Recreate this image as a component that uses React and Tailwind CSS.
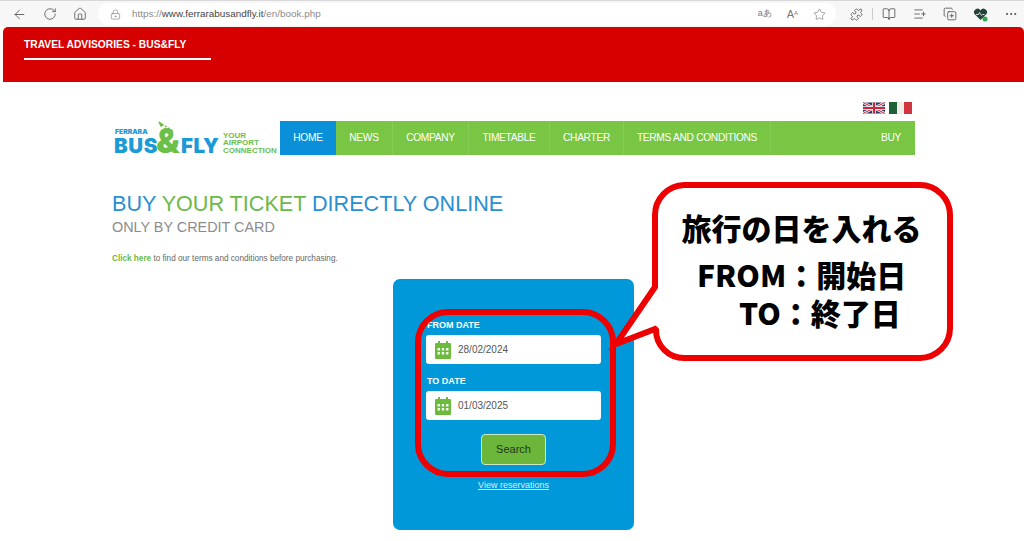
import { ArrowLeft, RotateCw, Home, LockKeyhole, Star, BookOpen, ListPlus, CopyPlus, MoreHorizontal, Puzzle } from 'lucide-react';

const sans = 'font-["Liberation_Sans",Arial,sans-serif]';

const navItems = [
  { label: 'NEWS', width: 'w-[57px]' },
  { label: 'COMPANY', width: 'w-[76px]' },
  { label: 'TIMETABLE', width: 'w-[81px]' },
  { label: 'CHARTER', width: 'w-[74px]' },
  { label: 'TERMS AND CONDITIONS', width: 'w-[147px]' },
];

function CalendarIcon() {
  return (
    <svg width="16" height="18" viewBox="0 0 16 18" className="shrink-0">
      <rect x="3" y="0" width="2" height="4" fill="#6cbb3c" />
      <rect x="11" y="0" width="2" height="4" fill="#6cbb3c" />
      <path d="M1 2h14a1 1 0 0 1 1 1v14a1 1 0 0 1-1 1H1a1 1 0 0 1-1-1V3a1 1 0 0 1 1-1z" fill="#6cbb3c" />
      <g fill="#ffffff" opacity="0.9">
        <rect x="2.5" y="7" width="2.5" height="2.5" />
        <rect x="6.75" y="7" width="2.5" height="2.5" />
        <rect x="11" y="7" width="2.5" height="2.5" />
        <rect x="2.5" y="11" width="2.5" height="2.5" />
        <rect x="6.75" y="11" width="2.5" height="2.5" />
        <rect x="11" y="11" width="2.5" height="2.5" />
      </g>
    </svg>
  );
}

function DateField({ label, value }) {
  return (
    <div>
      <div className="ml-[1px] text-[9px] leading-[12px] font-bold text-white">{label}</div>
      <div className="mt-[4px] flex h-[29px] w-[175px] items-center gap-[7px] rounded-[3px] bg-white pl-[9px] text-[10px] text-[#555]">
        <CalendarIcon />
        {value}
      </div>
    </div>
  );
}

function Flags() {
  return (
    <div className="flex justify-end gap-[4px] pr-[3px]">
      <svg width="22" height="12" viewBox="0 0 60 30">
        <rect width="60" height="30" fill="#2b3a6b" />
        <path d="M0 0L60 30M60 0L0 30" stroke="#fff" strokeWidth="7" />
        <path d="M0 0L60 30M60 0L0 30" stroke="#c8283c" strokeWidth="3" />
        <path d="M30 0V30M0 15H60" stroke="#fff" strokeWidth="10" />
        <path d="M30 0V30M0 15H60" stroke="#c8283c" strokeWidth="6" />
      </svg>
      <div className="flex h-[12px] w-[23px]">
        <div className="flex-1 bg-[#1f5f38]" />
        <div className="flex-1 bg-[#f0ede6]" />
        <div className="flex-1 bg-[#d0343c]" />
      </div>
    </div>
  );
}

function Logo() {
  return (
    <div className="relative flex h-[34px] w-[167px] items-end pb-[1px]">
      <div className='relative h-[33px] w-[110px] font-["Inter",sans-serif] font-black'>
        <div className="absolute left-[2px] top-[7px] text-[6.8px] leading-[7px] text-[#1b9ad6]">FERRARA</div>
        <div className="absolute bottom-[0px] left-[1px] text-[20.5px] leading-[17px] tracking-[0.6px] text-[#1b9ad6]">BUS</div>
        <div className="absolute bottom-[0px] left-[43px] text-[34px] leading-[26px] text-[#6cc04a]">&amp;</div>
        <div className="absolute bottom-[0px] left-[68px] text-[20.5px] leading-[17px] tracking-[0.6px] text-[#1b9ad6]">FLY</div>
        <svg width="18" height="15" viewBox="0 0 18 15" className="absolute left-[45px] top-[0px]">
          <path d="M1 1l4 3-2 1z" stroke="#6cc04a" strokeWidth="1.4" fill="#6cc04a" />
          <path d="M7 5l1.5 1M10 7l1.5 1M13 9l1.5 1" stroke="#6cc04a" strokeWidth="1.6" fill="none" />
        </svg>
      </div>
      <div className="text-[8px] leading-[7.5px] font-bold whitespace-nowrap text-[#6cc04a]">
        YOUR<br />AIRPORT<br />CONNECTION
      </div>
    </div>
  );
}

export default function App() {
  return (
    <div className={`relative h-[541px] w-[1024px] overflow-hidden bg-white ${sans}`}>
      {/* browser chrome */}
      <div className="flex h-[27px] items-center border-t border-[#d8d8d8] bg-[#f7f7f7] text-[#555]">
        <div className="ml-[12px] flex items-center gap-[16px]">
          <ArrowLeft size={15} strokeWidth={1.4} />
          <RotateCw size={14} strokeWidth={1.4} />
          <Home size={14} strokeWidth={1.4} />
        </div>
        <div className="ml-[11px] flex h-[22px] w-[738px] items-center rounded-l-full rounded-r-full bg-white pl-[12px]">
          <LockKeyhole size={11} strokeWidth={1.3} className="text-[#777]" />
          <span className="ml-[11px] text-[9.9px] text-[#8a8a8a]">
            https://<span className="text-[#444]">www.ferrarabusandfly.it</span>/en/book.php
          </span>
          <div className="ml-auto mr-[10px] flex items-center gap-[15px] text-[#777]">
            <span className="text-[9px]">aあ</span>
            <span className="text-[11px]">A<sup className="text-[6px]">A</sup></span>
            <Star size={13} strokeWidth={1.2} />
          </div>
        </div>
        <div className="ml-[14px] flex items-center text-[#444]">
          <Puzzle size={13} strokeWidth={1.4} />
          <div className="mx-[9px] h-[12px] w-px bg-[#ccc]" />
          <BookOpen size={14} strokeWidth={1.3} />
          <ListPlus size={14} strokeWidth={1.3} className="ml-[17px]" />
          <CopyPlus size={14} strokeWidth={1.3} className="ml-[16px]" />
          <svg width="15" height="15" viewBox="0 0 15 15" className="ml-[16px]">
            <path d="M7.5 13L1.5 7A3.4 3.4 0 0 1 7.5 3.5A3.4 3.4 0 0 1 13.5 7Z" fill="#24443a" />
            <path d="M3 7.5h2.5l1-2 2 3 1-1h2" stroke="#fff" strokeWidth="0.8" fill="none" />
            <circle cx="12" cy="12" r="2.5" fill="#2fa84f" />
          </svg>
          <MoreHorizontal size={14} strokeWidth={1.5} className="ml-[16px]" />
        </div>
      </div>

      {/* advisory banner */}
      <div className="ml-[3px] h-[55px] rounded-t-[5px] bg-[#d60000] pl-[21px] pt-[12px]">
        <div className="text-[10.25px] leading-[12px] font-bold text-white">TRAVEL ADVISORIES - BUS&amp;FLY</div>
        <div className="mt-[7px] h-[2px] w-[187px] bg-white" />
      </div>

      {/* page content */}
      <div className="pl-[113px]">
        <div className="w-[802px] pt-[20px]">
          <Flags />
          <div className="mt-[7px] flex items-end">
            <Logo />
            <nav className="flex h-[34px] flex-1 items-center bg-[#78c643] text-[10.2px] tracking-[-0.3px] text-white">
              <div className="flex h-full w-[56px] items-center justify-center bg-[#0a8fd9]">HOME</div>
              {navItems.map((item) => (
                <div key={item.label} className={`flex h-full items-center justify-center border-r border-[#86cc55] ${item.width}`}>
                  {item.label}
                </div>
              ))}
              <div className="ml-auto pr-[14px]">BUY</div>
            </nav>
          </div>
        </div>

        <h1 className="mt-[36px] ml-[-1px] text-[21.6px] leading-[26px] text-[#2a8fd0]">
          BUY <span className="text-[#6cb947]">YOUR TICKET</span> DIRECTLY ONLINE
        </h1>
        <p className="ml-[-1px] text-[14.4px] leading-[20px] text-[#8c8c8c]">ONLY BY CREDIT CARD</p>
        <p className="ml-[-1px] mt-[16px] text-[8.2px] leading-[12px] text-[#666]">
          <span className="font-bold text-[#6cb947]">Click here</span> to find our terms and conditions before purchasing.
        </p>

        {/* search form */}
        <div className="ml-[280px] mt-[14px] h-[251px] w-[241px] rounded-[7px] bg-[#0098d8] pl-[33px] pt-[40px]">
          <DateField label="FROM DATE" value="28/02/2024" />
          <div className="mt-[11px]">
            <DateField label="TO DATE" value="01/03/2025" />
          </div>
          <div className="w-[175px]">
            <button className="mx-auto mt-[14px] block h-[31px] w-[65px] rounded-[4px] border border-[#cfe8c4] bg-[#6cb63c] text-[11px] text-[#1d3b1a]">
              Search
            </button>
            <div className="mt-[14px] text-center text-[9px] leading-[12px] text-[#d8f0fb] underline">View reservations</div>
          </div>
        </div>
      </div>

      {/* annotation drawn over the page */}
      <svg width="1024" height="541" className="absolute left-0 top-0">
        <rect x="418" y="312" width="195" height="162" rx="30" fill="none" stroke="#ee0000" strokeWidth="6" />
        <path
          d="M684 185H920A30 30 0 0 1 950 215V328A30 30 0 0 1 920 358H684A28 28 0 0 1 656 330L655 329L616 344L655 287V215A30 30 0 0 1 684 185Z"
          fill="#ffffff"
          stroke="#ee0000"
          strokeWidth="6"
          strokeLinejoin="miter"
        />
      </svg>
      <div className='absolute left-[651px] top-[212px] w-[301px] text-center font-["Noto_Sans_CJK_JP",sans-serif] text-[30px] leading-[30px] font-black text-black'>
        旅行の日を入れる
      </div>
      <div className='absolute left-[697px] top-[259px] font-["Noto_Sans_CJK_JP",sans-serif] text-[30px] leading-[30px] font-black whitespace-nowrap text-black'>
        FROM：開始日
      </div>
      <div className='absolute left-[739px] top-[297px] font-["Noto_Sans_CJK_JP",sans-serif] text-[30px] leading-[30px] font-black whitespace-nowrap text-black'>
        TO：終了日
      </div>
    </div>
  );
}
